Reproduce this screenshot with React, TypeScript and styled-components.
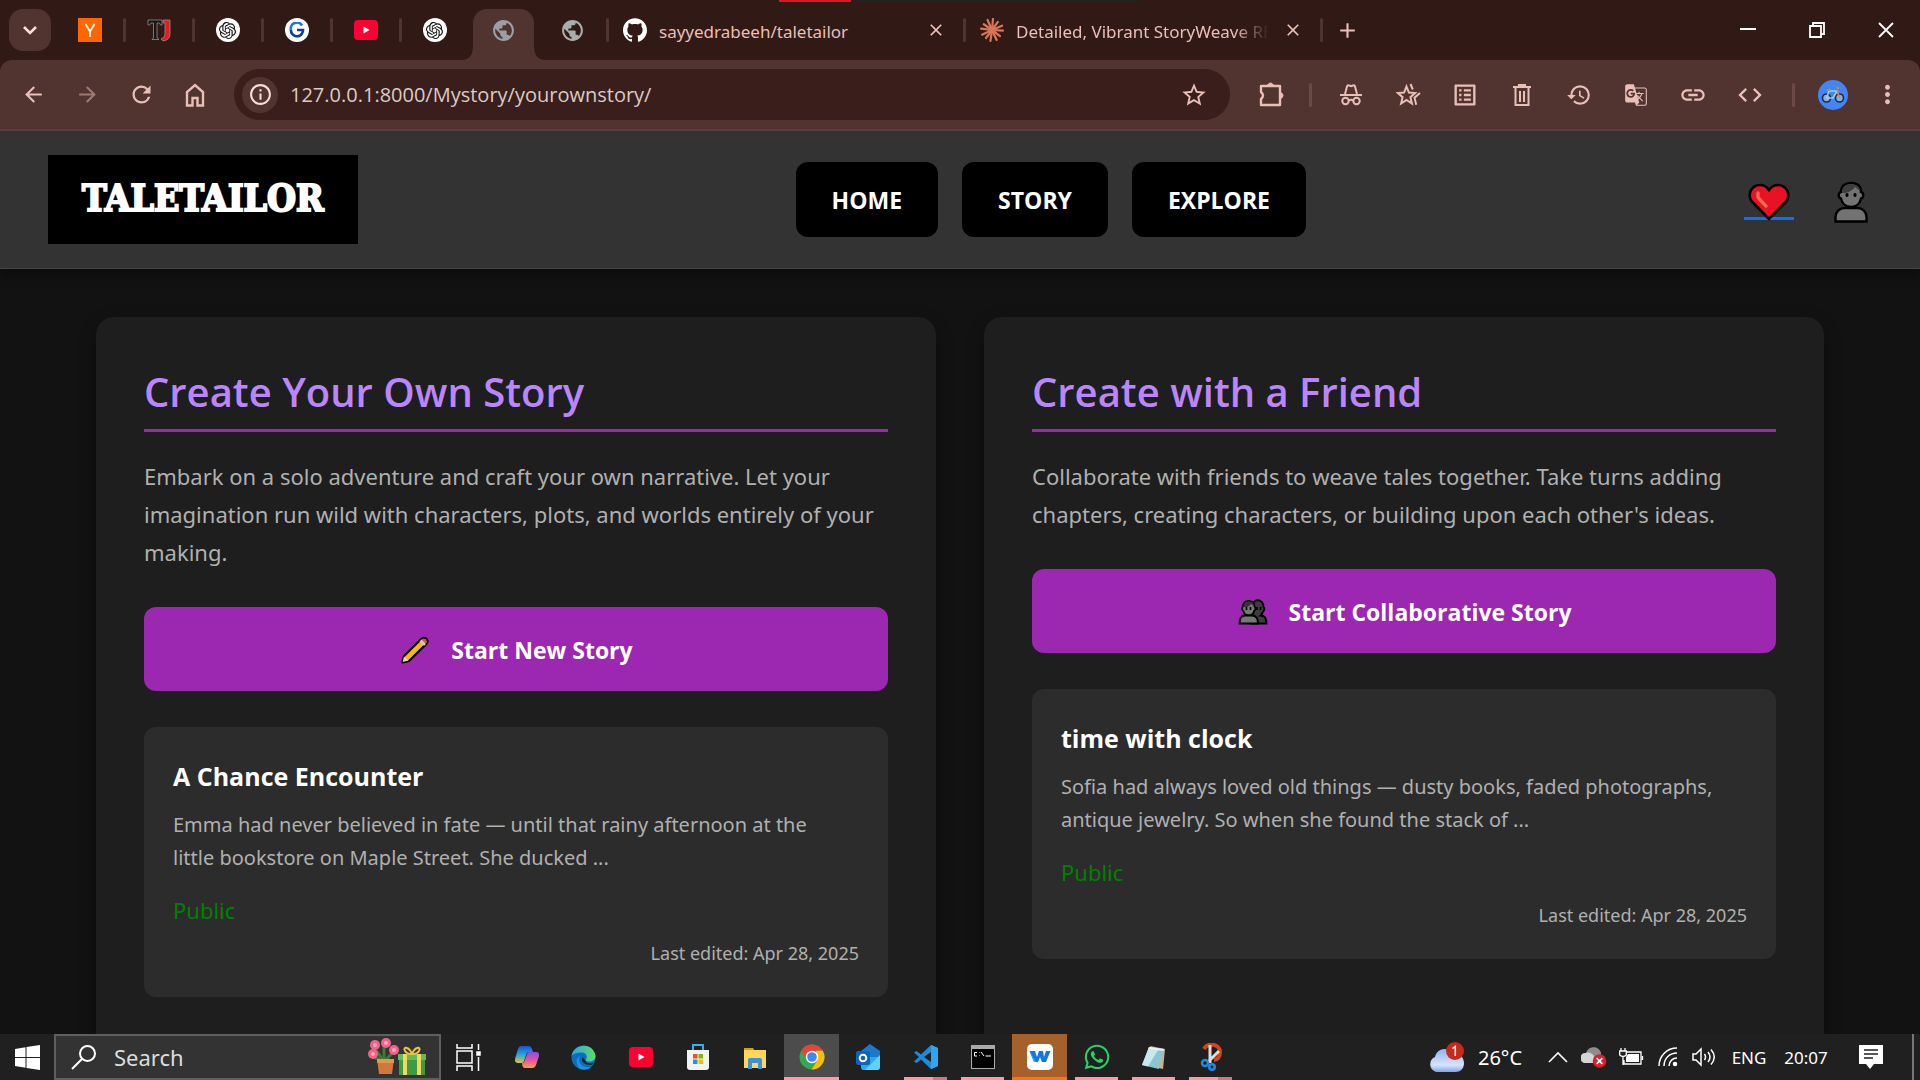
import React from "react";
import styled, { createGlobalStyle, css } from "styled-components";
import { SiOpenai, SiGithub } from "react-icons/si";
import { FaWhatsapp } from "react-icons/fa";
import {
  MdAdd, MdArrowBack, MdArrowForward, MdClose, MdCode, MdHistory, MdInfoOutline, MdLink,
  MdMoreVert, MdOutlineGTranslate, MdOutlineListAlt, MdPublic,
  MdRefresh, MdStarOutline,
} from "react-icons/md";

const textFont = `"Noto Sans", "Open Sans", sans-serif`;
const strongFont = `"Open Sans", "Noto Sans", sans-serif`;

const GlobalStyle = createGlobalStyle`
  * { box-sizing: border-box; }
  body { margin: 0; background: #121212; font-family: ${textFont}; }
  button, input { font-family: inherit; }
  h2, h3, p { margin: 0; }
`;

const Screen = styled.div`
  display: flex;
  flex-direction: column;
  height: 100vh;
  overflow: hidden;
`;

const bareButton = css`
  display: flex;
  align-items: center;
  justify-content: center;
  flex: none;
  border: 0;
  padding: 0;
  background: none;
  color: inherit;
`;

/* ---------- tab strip ---------- */

const TabStrip = styled.div`
  position: relative;
  display: flex;
  align-items: center;
  flex: none;
  height: 60px;
  padding-left: 9px;
  background: #311a16;
  color: #eabfb8;
`;

const LoadingBar = styled.div`
  position: absolute;
  top: 0;
  left: 779px;
  width: 360px;
  height: 2px;
  background: linear-gradient(to right, #e81123 20%, #222 20%);
`;

const TabSearch = styled.button`
  ${bareButton}
  width: 42px;
  height: 42px;
  margin-right: 4px;
  border-radius: 14px;
  background: #51332f;
  color: #f8ded9;
`;

const Tab = styled.div<{ $wide?: boolean; $active?: boolean; $divider?: boolean }>`
  position: relative;
  display: flex;
  align-items: center;
  justify-content: ${(p) => (p.$wide ? "flex-start" : "center")};
  gap: 12px;
  width: ${(p) => (p.$wide ? "357px" : "69px")};
  height: 51px;
  align-self: flex-end;
  padding: ${(p) => (p.$wide ? "0 16px 9px" : "0 0 9px")};
  &::after {
    content: "";
    display: ${(p) => (p.$divider ? "block" : "none")};
    position: absolute;
    right: -2px;
    top: 9px;
    width: 3px;
    height: 24px;
    border-radius: 2px;
    background: #51332f;
  }
  ${(p) => p.$active && css`
    z-index: 1;
    &::before {
      content: "";
      position: absolute;
      inset: 0 4px;
      z-index: -1;
      border-radius: 14px 14px 0 0;
      background: #51332f;
    }
  `}
`;

const TabFlare = styled.svg`
  position: absolute;
  left: -8px;
  bottom: 0;
  z-index: -1;
`;

const TabTitle = styled.span<{ $fade?: boolean }>`
  flex: 1;
  overflow: hidden;
  white-space: nowrap;
  font-size: 17px;
  line-height: 24px;
  padding-top: 3px;
  ${(p) => p.$fade && css`mask-image: linear-gradient(to right, #000 86%, transparent);`}
`;

const IconButton = styled.button<{ $w: number; $dim?: boolean }>`
  ${bareButton}
  width: ${(p) => p.$w}px;
  height: 40px;
  opacity: ${(p) => (p.$dim ? 0.5 : 1)};
`;

const WindowControls = styled.div`
  display: flex;
  margin-left: auto;
  color: #fff;
`;

const RoundIcon = styled.span`
  display: flex;
  align-items: center;
  justify-content: center;
  width: 24px;
  height: 24px;
  border-radius: 50%;
  background: #fff;
  color: #111;
`;

/* ---------- toolbar ---------- */

const ToolbarBack = styled.div`
  flex: none;
  background: #311a16;
`;

const Toolbar = styled.div`
  display: flex;
  align-items: center;
  height: 71px;
  padding: 0 6px;
  border-bottom: 2px solid #5f3e39;
  border-radius: 12px 12px 0 0;
  background: #51332f;
  color: #eabfb8;
`;

const AddressBar = styled.form`
  display: flex;
  flex: 1;
  align-items: center;
  height: 51px;
  margin: 0 12px;
  padding: 0 8px;
  border-radius: 26px;
  background: #3a1e1b;
`;

const SiteInfo = styled.button`
  ${bareButton}
  width: 36px;
  height: 36px;
  border-radius: 50%;
  background: #51332f;
  color: #f8ded9;
`;

const AddressInput = styled.input`
  flex: 1;
  min-width: 0;
  margin-left: 12px;
  padding: 0;
  border: 0;
  outline: 0;
  background: none;
  color: #dccac6;
  font-family: ${strongFont};
  font-size: 20px;
`;

const ToolGroup = styled.div`
  display: flex;
  margin-right: 4px;
`;

const ToolDivider = styled.span`
  flex: none;
  width: 3px;
  height: 24px;
  margin: 0 10px;
  border-radius: 2px;
  background: #6c4a45;
`;

const Avatar = styled.button`
  ${bareButton}
  width: 30px;
  height: 30px;
  margin: 0 12px 0 13px;
  border-radius: 50%;
  background: #4285f4;
`;

/* ---------- web page ---------- */

const Page = styled.div`
  flex: 1;
  min-height: 0;
  overflow: hidden;
  background: #121212;
`;

const SiteHeader = styled.header`
  display: flex;
  align-items: center;
  justify-content: space-between;
  padding: 24px 44px 24px 48px;
  border-bottom: 1px solid #444;
  background: #333;
  box-shadow: 0 4px 12px rgba(0, 0, 0, 0.4);
`;

const Brand = styled.a`
  padding: 19px 34px 22px;
  background: #000;
  color: #fff;
  font: 700 37px/48px "DejaVu Serif Condensed", "DejaVu Serif", serif;
  -webkit-text-stroke: 2px #fff;
  text-decoration: none;
`;

const SiteNav = styled.nav`
  display: flex;
  gap: 24px;
`;

const NavLink = styled.a`
  padding: 19px 36px 17px;
  border-radius: 12px;
  background: #000;
  color: #fff;
  font-family: ${strongFont};
  font-size: 23px;
  font-weight: 700;
  line-height: 39px;
  text-decoration: none;
`;

const HeaderIcons = styled.div`
  display: flex;
  gap: 32px;
`;

const HeaderIcon = styled.a<{ $underline?: boolean }>`
  display: flex;
  align-items: flex-end;
  justify-content: center;
  width: 50px;
  height: 46px;
  padding-bottom: ${(p) => (p.$underline ? "2px" : "0")};
  background: ${(p) =>
    p.$underline ? "linear-gradient(#0d6efd, #0d6efd) 0 40px / 100% 3px no-repeat" : "none"};
`;

const Columns = styled.main`
  display: grid;
  grid-template-columns: 1fr 1fr;
  gap: 48px;
  padding: 48px 96px;
`;

const Panel = styled.section`
  min-height: 800px;
  padding: 48px;
  border-radius: 18px;
  background: #1e1e1e;
  box-shadow: 0 6px 18px rgba(0, 0, 0, 0.3);
`;

const PanelTitle = styled.h2`
  margin-bottom: 25px;
  padding-bottom: 10px;
  border-bottom: 3px solid #9c27b0;
  color: #bb86fc;
  font-family: ${strongFont};
  font-size: 40px;
  font-weight: 600;
  line-height: 54px;
`;

const PanelText = styled.p`
  margin-bottom: 36px;
  color: #b0b0b0;
  font-size: 22px;
  line-height: 38px;
`;

const StartButton = styled.button`
  display: flex;
  align-items: center;
  justify-content: center;
  gap: 20px;
  width: 100%;
  height: 84px;
  margin-bottom: 36px;
  padding: 2px 0 0;
  border: 0;
  border-radius: 12px;
  background: #9c27b0;
  color: #fff;
  font-family: ${strongFont};
  font-size: 23px;
  font-weight: 700;
`;

const StoryCard = styled.article`
  padding: 29px;
  border-radius: 12px;
  background: #2c2c2c;
`;

const StoryTitle = styled.h3`
  margin-bottom: 12px;
  color: #fff;
  font-family: ${strongFont};
  font-size: 25px;
  font-weight: 700;
  line-height: 40px;
`;

const StoryText = styled.p`
  margin-bottom: 17px;
  padding-right: 12px;
  color: #b0b0b0;
  font-size: 20px;
  line-height: 33px;
`;

const Visibility = styled.p`
  margin-bottom: 10px;
  color: #008000;
  font-size: 22px;
  line-height: 38px;
`;

const Edited = styled.p`
  color: #b0b0b0;
  font-size: 18px;
  line-height: 29px;
  text-align: right;
`;

/* ---------- taskbar ---------- */

const Taskbar = styled.footer`
  display: flex;
  flex: none;
  height: 46px;
  background: #202020;
  color: #fff;
`;

const SearchBox = styled.label`
  display: flex;
  align-items: center;
  width: 387px;
  padding: 0 13px 0 15px;
  border: 2px solid #5f5f5f;
  background: #333;
`;

const SearchInput = styled.input`
  flex: 1;
  min-width: 0;
  margin-left: 17px;
  padding: 0;
  border: 0;
  outline: 0;
  background: none;
  font-size: 22px;
  &::placeholder { color: #ddd; opacity: 1; }
`;

type TaskState = "none" | "active" | "alert" | "open" | "multi";

const lineFor: Record<TaskState, string> = {
  none: "transparent",
  active: "#ff9aa5",
  alert: "#ff7500",
  open: "#ff9aa5",
  multi: "linear-gradient(to right, #ff9aa5 67%, #c97a84 67%)",
};

const TaskButton = styled.button<{ $state: TaskState }>`
  ${bareButton}
  position: relative;
  width: 55px;
  height: 46px;
  margin: 0 1px;
  background: ${(p) => (p.$state === "active" ? "#4c4c4c" : p.$state === "alert" ? "#a66029" : "none")};
  &::after {
    content: "";
    position: absolute;
    bottom: 0;
    left: ${(p) => (p.$state === "active" || p.$state === "alert" ? "0" : "6px")};
    right: ${(p) => (p.$state === "active" || p.$state === "alert" ? "0" : "6px")};
    height: 3px;
    background: ${(p) => lineFor[p.$state]};
  }
`;

const StartMenu = styled.button`
  ${bareButton}
  width: 54px;
`;

const Tray = styled.div`
  display: flex;
  align-items: center;
  margin-left: auto;
  padding-right: 6px;
`;

const TrayItem = styled.button<{ $w: number; $size?: number }>`
  ${bareButton}
  width: ${(p) => p.$w}px;
  height: 46px;
  gap: 12px;
  font-size: ${(p) => p.$size ?? 17}px;
  white-space: nowrap;
`;

const ShowDesktop = styled.span`
  width: 2px;
  height: 46px;
  margin-left: 6px;
  background: #777;
`;

/* ---------- drawings ---------- */

const Heart = () => (
  <svg width="42" height="38" viewBox="0 0 42 38">
    <path d="M21 36 3.800 18.400C-1.500 11 4 2 12 2c4 0 7 2 9 5 2-3 5-5 9-5 8 0 13.500 9 8.200 16.400z" fill="#e81224" stroke="#000" strokeWidth="2.600" />
    <path d="M10 10v4q1 2 8 9" fill="none" stroke="#f4694f" strokeWidth="3.400" strokeLinecap="round" strokeLinejoin="round" />
  </svg>
);

const Person = () => (
  <svg width="34" height="42" viewBox="0 0 34 42">
    <path d="M7 11C7 5 11 2 17 2s10 3 10 9c3 .5 3 6 0 6.500-1 5-5 8.500-10 8.500S8 22.500 7 17.500c-3-.5-3-6 0-6.500z" fill="#737373" stroke="#000" strokeWidth="2.400" />
    <path d="M8 12C8 6 12 3 17 3c4 0 8 2 9 7l-5-4c-4 5-8 6-13 6z" fill="#3d3d3d" />
    <path d="M1.500 40.500V36c0-5 4-9 9-9h13c5 0 9 4 9 9v4.500z" fill="#737373" stroke="#000" strokeWidth="2.400" />
    <ellipse cx="13" cy="14" rx="1.600" ry="2" /><ellipse cx="21" cy="14" rx="1.600" ry="2" />
  </svg>
);

const Pencil = () => (
  <svg width="32" height="28" viewBox="0 0 32 28">
    <path d="M3.500 26.500 5 20 22.500 2.800q3-2 5 0 2 2.400 0 4.800L10 25z" fill="#ffb900" stroke="#000" strokeWidth="2.200" strokeLinejoin="round" />
    <path d="m5 20.500-1.300 5.600L9.500 24.500z" fill="#f3d9b5" />
    <path d="m20.500 5.500 4.500 4.500 2-2-4.500-4.600z" fill="#ccc" />
    <path d="m22.600 3.600 4.200 4.300q2-2 .3-4.100-2.200-1.800-4.500-.2z" fill="#ef4650" />
  </svg>
);

const Friends = () => (
  <svg width="32" height="26" viewBox="0 0 32 26">
    <path d="M15 8c0-9 11.500-9 11.500 0 1.500 1 1 4-.4 4.500-.6 2-1.500 3-2.600 4 4 0 6 3 6 8H14z" fill="#3c3c3c" stroke="#000" strokeWidth="1.800" />
    <path d="M6 7.500C6 0 17.500 0 17.500 7.500c1.500 1 1 4-.4 4.500-.6 3-3 4.500-5.300 4.500S7 15 6.400 12C5 11.500 4.500 8.500 6 7.500z" fill="#777" stroke="#000" strokeWidth="1.800" />
    <path d="M6.500 8c1-7 10-7 10.500-1l-3-2c-2 3-4.500 3-7.500 3z" fill="#333" />
    <path d="M2.500 24.500C2.500 19 5 16.500 8 16.500h7c4 0 6 3 6 8z" fill="#777" stroke="#000" strokeWidth="1.800" />
    <path d="M9.500 8v3M13.500 8v3M20 8v3M23.500 8v3" stroke="#000" strokeWidth="1.600" />
  </svg>
);

const YIcon = () => (
  <svg width="24" height="24" viewBox="0 0 24 24"><path fill="#f60" d="M0 0h24v24H0z" /><path d="m7.500 6 4.500 7.500V19m0-5.500L16.500 6" fill="none" stroke="#fff" strokeWidth="1.700" /></svg>
);

const TJIcon = () => (
  <svg width="24" height="24" viewBox="0 0 24 24">
    <path d="M1 2h14v5h-1.500L12.500 5H10v15l2 1.500H5L6.500 20V5H4L2.500 7H1z" fill="#161616" stroke="#9a8a87" strokeWidth=".8" />
    <path d="M16 2h7v14q0 6-7 7l-2-2q4-1 4-5V5h-2z" fill="#e51b23" stroke="#9a8a87" strokeWidth=".8" />
  </svg>
);

const GIcon = () => (
  <svg width="16" height="16" viewBox="0 0 16 16" fill="none" stroke="#1557b8" strokeWidth="2.600">
    <path d="M13 3.500A6 6 0 0 0 2 8" stroke="#1a73e8" /><path d="M2 8a6 6 0 0 0 11 3.500Q14 10 14 8H8" stroke="#0b3fa5" />
  </svg>
);

const YouTube = () => (
  <svg width="24" height="24" viewBox="0 0 24 24"><rect y="2" width="24" height="20" rx="4" fill="#f03" /><path d="m9.500 8.500 6 3.500-6 3.500z" fill="#fff" /></svg>
);

const Claude = () => (
  <svg width="24" height="24" viewBox="0 0 24 24" stroke="#d97757" strokeWidth="2.200" strokeLinecap="round">
    {[0, 31, 62, 88, 122, 150, 183, 212, 240, 272, 300, 331].map((a, i) => (
      <path key={a} d={`M12 12V${i % 3 === 1 ? 2 : 1}`} transform={`rotate(${a + 5} 12 12)`} />
    ))}
  </svg>
);

const Extension = () => (
  <svg width="28" height="28" viewBox="0 0 28 28" fill="none" stroke="currentColor" strokeWidth="2.400" strokeLinejoin="round">
    <path d="M4 5h19v19H4v-6q4-3.500 0-7z" /><path d="M10.500 4q3-4 6 0zM24 11.500q4 3 0 6z" fill="currentColor" strokeWidth="1" />
  </svg>
);

const Incognito = () => (
  <svg width="24" height="24" viewBox="0 0 24 24" fill="none" stroke="currentColor" strokeWidth="2">
    <path d="M1 12h22" /><path d="M6 11 8 3.500q.4-1.500 2-1l2 .7 2-.7q1.600-.5 2 1L18 11" /><circle cx="6.500" cy="18" r="3.200" /><circle cx="17.500" cy="18" r="3.200" /><path d="M9.700 17.500q2.300-1.500 4.600 0" />
  </svg>
);

const Bookmarks = () => (
  <svg width="26" height="24" viewBox="0 0 26 24" fill="none" stroke="currentColor" strokeWidth="2">
    <path d="m11.500 3.500 2.400 6 6.200.5-4.700 4.200 1.500 6.300-5.400-3.500-5.400 3.500 1.500-6.300L2.900 10l6.200-.5z" />
    <path d="m15.500 1 2.300 5.500M25 10l-5.500 4.700 1.700 7" />
  </svg>
);

const Trash = () => (
  <svg width="24" height="24" viewBox="0 0 24 24" fill="none" stroke="currentColor" strokeWidth="2">
    <path d="M3 4h18M9 3.500V2h6v1.500M5.500 5v17h13V5M10 8v11M14 8v11" />
  </svg>
);

const HomeIcon = () => (
  <svg width="24" height="26" viewBox="0 0 24 26" fill="none" stroke="currentColor" strokeWidth="2.400"><path d="M4 23.500V10l8-7 8 7v13.500h-5.500V16h-5v7.500z" /></svg>
);

const Bicycle = () => (
  <svg width="24" height="18" viewBox="0 0 24 18" fill="none" strokeWidth="1.600">
    <circle cx="5.500" cy="12" r="4" fill="#7fb2e8" stroke="#222b3a" /><circle cx="18.500" cy="12" r="4" fill="#7fb2e8" stroke="#222b3a" />
    <path d="M5.500 12 8 5h8l-4 7z" stroke="#8fd0ff" /><path d="m16 4 2.500 8M15 2h3M6 4h4" stroke="#e8823f" />
  </svg>
);

const WindowsLogo = () => (
  <svg width="25" height="25" viewBox="0 0 25 25" fill="#fff"><path d="M0 4l10.500-1.700V12H0zM11.500 2 25 0v12H11.500zM0 13h10.500v9.700L0 21zM11.500 13H25v12l-13.500-2z" /></svg>
);

const Magnifier = () => (
  <svg width="26" height="26" viewBox="0 0 26 26" fill="none" stroke="#fff" strokeWidth="2"><circle cx="16.500" cy="9.500" r="7.500" /><path d="M11.200 14.800 1 25" /></svg>
);

const FlowerGift = () => (
  <svg width="58" height="38" viewBox="0 0 58 38">
    <path d="M16 24 8 12M16 24V8M16 24l9-10M13 22 5 19" stroke="#3f7a35" strokeWidth="3" />
    <path d="M9 21h17l-2 15H11z" fill="#d0793b" /><path d="M9 21h17v4H9z" fill="#e59450" />
    {[[7, 7], [18, 5], [26, 12], [5, 16]].map(([x, y]) => (
      <g key={x}><circle cx={x} cy={y} r="5" fill="#f2638c" /><circle cx={x} cy={y} r="2" fill="#ffa3b8" /></g>
    ))}
    <path d="M31 19h26v18H31z" fill="#3f9a45" /><path d="M30 16h28v6H30z" fill="#62bb58" />
    <path d="M35 16h4v21h-4zM49 16h4v21h-4z" fill="#f5d75c" />
    <path d="M44 16c-9 0-9-8-5-6 3 1 5 6 5 6zm0 0c9 0 9-8 5-6-3 1-5 6-5 6z" fill="none" stroke="#f2c438" strokeWidth="2" />
  </svg>
);

const TaskView = () => (
  <svg width="28" height="28" viewBox="2 0 28 28" fill="none" stroke="#fff" strokeWidth="1.500">
    <path d="M3 1v4h15V1M3 8h15v12H3zM3 28v-5h15v5M24.500 1v6M24.500 14v14" /><path d="M23 9h3v3h-3z" fill="#fff" />
  </svg>
);

const Copilot = () => (
  <svg width="24" height="24" viewBox="0 0 24 24">
    <defs>
      <linearGradient id="cpa" x2="0" y2="1"><stop stopColor="#1d4fd8" /><stop offset=".5" stopColor="#22a7e0" /><stop offset="1" stopColor="#e3c52c" /></linearGradient>
      <linearGradient id="cpb" x2="0" y2="1"><stop stopColor="#8a4be8" /><stop offset=".5" stopColor="#e254a5" /><stop offset="1" stopColor="#ff9a4d" /></linearGradient>
    </defs>
    <path d="M6 1h8q2 0 2.600 2L18 7h-4q-2 0-2.600 2L9 16q-.6 2-2.600 2H3q-4 0-2.700-5L3 4q1-3 3-3z" fill="url(#cpa)" />
    <path d="M18 23h-8q-2 0-2.600-2L7 18q2 0 2.600-2L12 9q.6-2 2.600-2H21q4 0 2.700 5L21 20q-1 3-3 3z" fill="url(#cpb)" />
  </svg>
);

const Edge = () => (
  <svg width="25" height="25" viewBox="0 0 25 25">
    <defs><linearGradient id="edg"><stop stopColor="#2aa5e8" /><stop offset="1" stopColor="#5fdc63" /></linearGradient></defs>
    <circle cx="12.500" cy="12.500" r="12" fill="#0f6cbd" />
    <path d="M.6 11C2-1 21-4 24.400 10c.7 5-3.400 7-7 6.500-3-.4-3-1.500-2-3 1.500-3-1.400-6-4.400-6C6 7.500 2 9 .6 11z" fill="url(#edg)" />
    <path d="M9 11c-3 6 2 13 11.500 11A12 12 0 0 1 9 24C4 19 5 13 9 11z" fill="#1c91e0" />
    <path d="M11 12q-1 8 9 8l3-2Q15 20 14 15z" fill="#202020" />
  </svg>
);

const Store = () => (
  <svg width="24" height="28" viewBox="0 0 24 28">
    <path d="M7 7V2h10v5" fill="none" stroke="#2db4f0" strokeWidth="2" /><path d="M1 7h22v17q0 3-3 3H4q-3 0-3-3z" fill="#f2f2f2" />
    <path d="M7 11h4.500v4.500H7z" fill="#f25022" /><path d="M12.500 11H17v4.500h-4.500z" fill="#7fba00" /><path d="M7 16.500h4.500V21H7z" fill="#00a4ef" /><path d="M12.500 16.500H17V21h-4.500z" fill="#ffb900" />
  </svg>
);

const Explorer = () => (
  <svg width="24" height="24" viewBox="0 0 24 24"><path d="M1 3h9l2 3H1z" fill="#d99a17" /><path d="M1 5h22v18H1z" fill="#ffd65c" /><path d="M5 24v-9q0-2 2-2h10q2 0 2 2v9h-4v-6H9v6z" fill="#3c91db" /></svg>
);

const Chrome = () => (
  <svg width="26" height="26" viewBox="0 0 26 26">
    <circle cx="13" cy="13" r="12.500" fill="#34a853" />
    <path d="M2.200 6.800A12.500 12.500 0 0 1 23.800 6.800H13L8 16z" fill="#ea4335" />
    <path d="M23.800 6.800A12.500 12.500 0 0 1 12.600 25.500L18.500 16 17 6.800z" fill="#fbbc05" />
    <circle cx="13" cy="13" r="6.200" fill="#fff" /><circle cx="13" cy="13" r="4.800" fill="#4285f4" />
  </svg>
);

const Outlook = () => (
  <svg width="25" height="28" viewBox="0 0 25 28">
    <path d="M5 8 14 1l10 7v16q0 3-3 3H8q-3 0-3-3z" fill="#1a78cf" /><path d="M5 14h19L11 27H8q-3 0-3-3z" fill="#2fa8ec" /><path d="M24 12v12q0 3-3 3H9z" fill="#5fd0f8" />
    <rect y="8" width="14" height="14" rx="2" fill="#0f64b8" /><circle cx="7" cy="15" r="3.300" fill="none" stroke="#fff" strokeWidth="2" />
  </svg>
);

const VSCode = () => (
  <svg width="26" height="26" viewBox="0 0 26 26"><path d="m18 1 7 3v18l-7 3L8 15.500 3.500 19 1 17.500 6 13 1 8.500 3.500 7 8 10.500zM18 8l-7 5 7 5z" fill="#1f8ad8" /><path d="m18 1 7 3v18l-7 3z" fill="#2ba7f5" /></svg>
);

const Terminal = () => (
  <svg width="24" height="24" viewBox="0 0 24 24"><path d="M0 0h24v24H0z" fill="#aaa" /><path d="M1 4h22v19H1z" fill="#000" /><path d="M6 7.500H3.500v3.500H6M8 7.500h.5M8 10.500h.5M10 7l3 4M14.500 11H20" stroke="#fff" fill="none" /></svg>
);

const WApp = () => (
  <svg width="26" height="26" viewBox="0 0 26 26"><rect width="26" height="26" rx="5" fill="#fff" /><path d="M2.500 7H8l2 6 2-6h4l1 6 2-6h4.500L19 18h-4l-2-5-2 5H7z" fill="#1277e6" /><path d="m2.500 7 6.500 11H7z" fill="#25b4f3" /></svg>
);

const Notepad = () => (
  <svg width="25" height="25" viewBox="0 0 25 25"><path d="m9 1 15 3-2 20-4-1z" fill="#c9b38b" /><path d="M8 2 23 4l-5 20L1 20z" fill="#8cc5d0" /><path d="M8 2 18 3.500 7 21.500 1 20z" fill="#c7e8ec" /><path d="m8 2 15 2-.5 2-15-2z" fill="#eee" /></svg>
);

const Snip = () => (
  <svg width="22" height="28" viewBox="0 0 22 28" fill="none">
    <path d="M4 6C8-1 20 1 20 9c0 5-3 8-6 8" stroke="#d4431a" strokeWidth="4" />
    <path d="M10 2v18M19 8 8 19" stroke="#ddd" strokeWidth="3" /><circle cx="5" cy="20" r="3" stroke="#1f8be0" strokeWidth="2.600" /><circle cx="12" cy="24" r="2.700" stroke="#1f8be0" strokeWidth="2.600" />
  </svg>
);

const Weather = () => (
  <svg width="38" height="32" viewBox="0 0 38 32">
    <defs><linearGradient id="wx" x2="0" y2="1"><stop stopColor="#8fb4ef" /><stop offset=".7" stopColor="#d7e4fa" /><stop offset="1" stopColor="#7ba4ec" /></linearGradient></defs>
    <path d="M8 31a8 8 0 0 1-1-15C9 7 20 5 24 13c7-2 12 3 12 9s-4 9-8 9z" fill="url(#wx)" />
    <circle cx="27" cy="10" r="9" fill="#c42b1c" /><path d="m24.500 7.500 2.800-2V15" fill="none" stroke="#fff" strokeWidth="1.500" />
  </svg>
);

const ChevronUp = () => (
  <svg width="20" height="12" viewBox="0 0 20 12" fill="none" stroke="#fff" strokeWidth="1.600"><path d="m1 11 9-9 9 9" /></svg>
);

const CloudError = () => (
  <svg width="26" height="22" viewBox="0 0 26 22">
    <path d="M4 17a5 5 0 0 1 1-10C8-1 18 0 20 7v10z" fill="#8d8d8d" /><path d="M4 17a5 5 0 0 1 1-10c5-2 9 3 12 10z" fill="#d5d5d5" />
    <circle cx="18.500" cy="15" r="6.800" fill="#d9202c" /><path d="m15.700 12.200 5.600 5.600m0-5.600-5.600 5.600" stroke="#fff" strokeWidth="1.700" />
  </svg>
);

const Battery = () => (
  <svg width="25" height="18" viewBox="0 0 25 18" fill="none" stroke="#fff" strokeWidth="1.300">
    <path d="M8 4h14v12H5v-4M23.500 8v4M2 0v3M6 0v3M.700 3h6.600v4Q4 10 .700 7zM4 9v8" /><path d="M9 6h11v8H7V9z" fill="#fff" stroke="none" />
  </svg>
);

const Wifi = () => (
  <svg width="20" height="20" viewBox="0 0 20 20" fill="none" stroke="#fff" strokeWidth="1.500">
    <path d="M1 19C1 9 9 1 19 1M6 19C6 11 12 6 19 6M11 19c0-5 4-8 8-8" /><circle cx="17" cy="17" r="1.500" fill="#fff" />
  </svg>
);

const Volume = () => (
  <svg width="24" height="20" viewBox="0 0 24 20" fill="none" stroke="#fff" strokeWidth="1.500"><path d="M1 7v6h3l5 5V2L4 7zM12.500 7q2 3 0 6M16 5q4 5 0 10M19 2.500q6.500 7.500 0 15" /></svg>
);

const Notification = () => (
  <svg width="24" height="24" viewBox="0 0 24 24"><path d="M0 0h24v19H15l-4 5-4-5H0z" fill="#fff" /><path d="M5 5h14M5 9h14M5 13h9" stroke="#202020" strokeWidth="1.400" /></svg>
);

/* ---------- screen ---------- */

interface Story { title: string; text: string; }

interface PanelProps { heading: string; text: string; action: string; icon: React.ReactNode; story: Story; }

const StoryPanel = ({ heading, text, action, icon, story }: PanelProps) => (
  <Panel>
    <PanelTitle>{heading}</PanelTitle>
    <PanelText>{text}</PanelText>
    <StartButton type="button">{icon}{action}</StartButton>
    <StoryCard>
      <StoryTitle>{story.title}</StoryTitle>
      <StoryText>{story.text}</StoryText>
      <Visibility>Public</Visibility>
      <Edited>Last edited: Apr 28, 2025</Edited>
    </StoryCard>
  </Panel>
);

const tools: [string, React.ReactNode][] = [
  ["Incognito", <Incognito />],
  ["Bookmarks", <Bookmarks />],
  ["Reading list", <MdOutlineListAlt size={28} />],
  ["Delete data", <Trash />],
  ["History", <MdHistory size={26} />],
  ["Translate", <MdOutlineGTranslate size={26} />],
  ["Copy link", <MdLink size={28} />],
  ["Developer tools", <MdCode size={28} />],
];

const tasks: [string, TaskState, React.ReactNode][] = [
  ["Task view", "none", <TaskView />],
  ["Copilot", "none", <Copilot />],
  ["Edge", "none", <Edge />],
  ["YouTube", "none", <YouTube />],
  ["Store", "none", <Store />],
  ["File Explorer", "none", <Explorer />],
  ["Chrome", "active", <Chrome />],
  ["Outlook", "none", <Outlook />],
  ["Code", "multi", <VSCode />],
  ["Command Prompt", "open", <Terminal />],
  ["Workspace", "alert", <WApp />],
  ["WhatsApp", "open", <FaWhatsapp size={28} color="#25d366" />],
  ["Notepad", "open", <Notepad />],
  ["Snipping Tool", "multi", <Snip />],
];

export default function App() {
  return (
    <Screen>
      <GlobalStyle />
      <TabStrip>
        <LoadingBar />
        <TabSearch aria-label="Search tabs">
          <svg width="14" height="10" viewBox="0 0 14 10" fill="none" stroke="currentColor" strokeWidth="2.600"><path d="m1 2 6 6 6-6" /></svg>
        </TabSearch>
        <Tab $divider><YIcon /></Tab>
        <Tab $divider><TJIcon /></Tab>
        <Tab $divider><RoundIcon><SiOpenai size={17} /></RoundIcon></Tab>
        <Tab $divider><RoundIcon><GIcon /></RoundIcon></Tab>
        <Tab $divider><YouTube /></Tab>
        <Tab><RoundIcon><SiOpenai size={17} /></RoundIcon></Tab>
        <Tab $active>
          <TabFlare width="85" height="14" viewBox="0 0 85 14" fill="#51332f"><path d="M0 14q12 0 12-14h61q0 14 12 14z" /></TabFlare>
          <MdPublic size={25} color="#9aa0a6" />
        </Tab>
        <Tab $divider><MdPublic size={25} color="#aaaeab" /></Tab>
        <Tab $wide $divider>
          <SiGithub size={24} color="#fff" />
          <TabTitle>sayyedrabeeh/taletailor</TabTitle>
          <IconButton $w={24} aria-label="Close tab"><MdClose size={20} /></IconButton>
        </Tab>
        <Tab $wide $divider>
          <Claude />
          <TabTitle $fade>Detailed, Vibrant StoryWeave RE</TabTitle>
          <IconButton $w={24} aria-label="Close tab"><MdClose size={20} /></IconButton>
        </Tab>
        <IconButton $w={52} aria-label="New tab"><MdAdd size={25} /></IconButton>
        <WindowControls>
          <IconButton $w={69} aria-label="Minimize"><svg width="16" height="16" viewBox="0 0 16 16"><path d="M0 7h16" stroke="#fff" strokeWidth="2" /></svg></IconButton>
          <IconButton $w={69} aria-label="Restore"><svg width="16" height="16" viewBox="0 0 16 16" fill="none" stroke="#fff" strokeWidth="1.800"><path d="M1 4h11v11H1zM4 4V1h11v11h-3" /></svg></IconButton>
          <IconButton $w={69} aria-label="Close"><svg width="16" height="16" viewBox="0 0 16 16"><path d="m1 1 14 14M15 1 1 15" stroke="#fff" strokeWidth="1.800" /></svg></IconButton>
        </WindowControls>
      </TabStrip>

      <ToolbarBack>
        <Toolbar>
          <IconButton $w={54} aria-label="Back"><MdArrowBack size={25} /></IconButton>
          <IconButton $w={54} $dim aria-label="Forward"><MdArrowForward size={25} /></IconButton>
          <IconButton $w={54} aria-label="Reload"><MdRefresh size={27} /></IconButton>
          <IconButton $w={54} aria-label="Home"><HomeIcon /></IconButton>
          <AddressBar>
            <SiteInfo type="button" aria-label="Site information"><MdInfoOutline size={25} /></SiteInfo>
            <AddressInput aria-label="Address" defaultValue="127.0.0.1:8000/Mystory/yourownstory/" />
            <IconButton $w={56} type="button" aria-label="Bookmark"><MdStarOutline size={28} /></IconButton>
          </AddressBar>
          <IconButton $w={57} aria-label="Extensions"><Extension /></IconButton>
          <ToolDivider />
          <ToolGroup>
            {tools.map(([name, icon]) => (
              <IconButton key={name} $w={57} aria-label={name}>{icon}</IconButton>
            ))}
          </ToolGroup>
          <ToolDivider />
          <Avatar aria-label="Profile"><Bicycle /></Avatar>
          <IconButton $w={54} aria-label="Menu"><MdMoreVert size={29} /></IconButton>
        </Toolbar>
      </ToolbarBack>

      <Page>
        <SiteHeader>
          <Brand href="#">TALETAILOR</Brand>
          <SiteNav>
            <NavLink href="#">HOME</NavLink>
            <NavLink href="#">STORY</NavLink>
            <NavLink href="#">EXPLORE</NavLink>
          </SiteNav>
          <HeaderIcons>
            <HeaderIcon href="#" $underline aria-label="Favourites"><Heart /></HeaderIcon>
            <HeaderIcon href="#" aria-label="Profile"><Person /></HeaderIcon>
          </HeaderIcons>
        </SiteHeader>
        <Columns>
          <StoryPanel
            heading="Create Your Own Story"
            text="Embark on a solo adventure and craft your own narrative. Let your imagination run wild with characters, plots, and worlds entirely of your making."
            action="Start New Story"
            icon={<Pencil />}
            story={{
              title: "A Chance Encounter",
              text: "Emma had never believed in fate — until that rainy afternoon at the little bookstore on Maple Street. She ducked ...",
            }}
          />
          <StoryPanel
            heading="Create with a Friend"
            text="Collaborate with friends to weave tales together. Take turns adding chapters, creating characters, or building upon each other's ideas."
            action="Start Collaborative Story"
            icon={<Friends />}
            story={{
              title: "time with clock",
              text: "Sofia had always loved old things — dusty books, faded photographs, antique jewelry. So when she found the stack of ...",
            }}
          />
        </Columns>
      </Page>

      <Taskbar>
        <StartMenu aria-label="Start"><WindowsLogo /></StartMenu>
        <SearchBox>
          <Magnifier />
          <SearchInput aria-label="Search" placeholder="Search" />
          <FlowerGift />
        </SearchBox>
        {tasks.map(([name, state, icon]) => (
          <TaskButton key={name} $state={state} aria-label={name}>{icon}</TaskButton>
        ))}
        <Tray>
          <TrayItem $w={130} $size={20}><Weather />26°C</TrayItem>
          <TrayItem $w={36} aria-label="Show hidden icons"><ChevronUp /></TrayItem>
          <TrayItem $w={36} aria-label="OneDrive"><CloudError /></TrayItem>
          <TrayItem $w={38} aria-label="Battery"><Battery /></TrayItem>
          <TrayItem $w={36} aria-label="Network"><Wifi /></TrayItem>
          <TrayItem $w={36} aria-label="Volume"><Volume /></TrayItem>
          <TrayItem $w={54}>ENG</TrayItem>
          <TrayItem $w={60}>20:07</TrayItem>
          <TrayItem $w={70} aria-label="Notifications"><Notification /></TrayItem>
          <ShowDesktop />
        </Tray>
      </Taskbar>
    </Screen>
  );
}
